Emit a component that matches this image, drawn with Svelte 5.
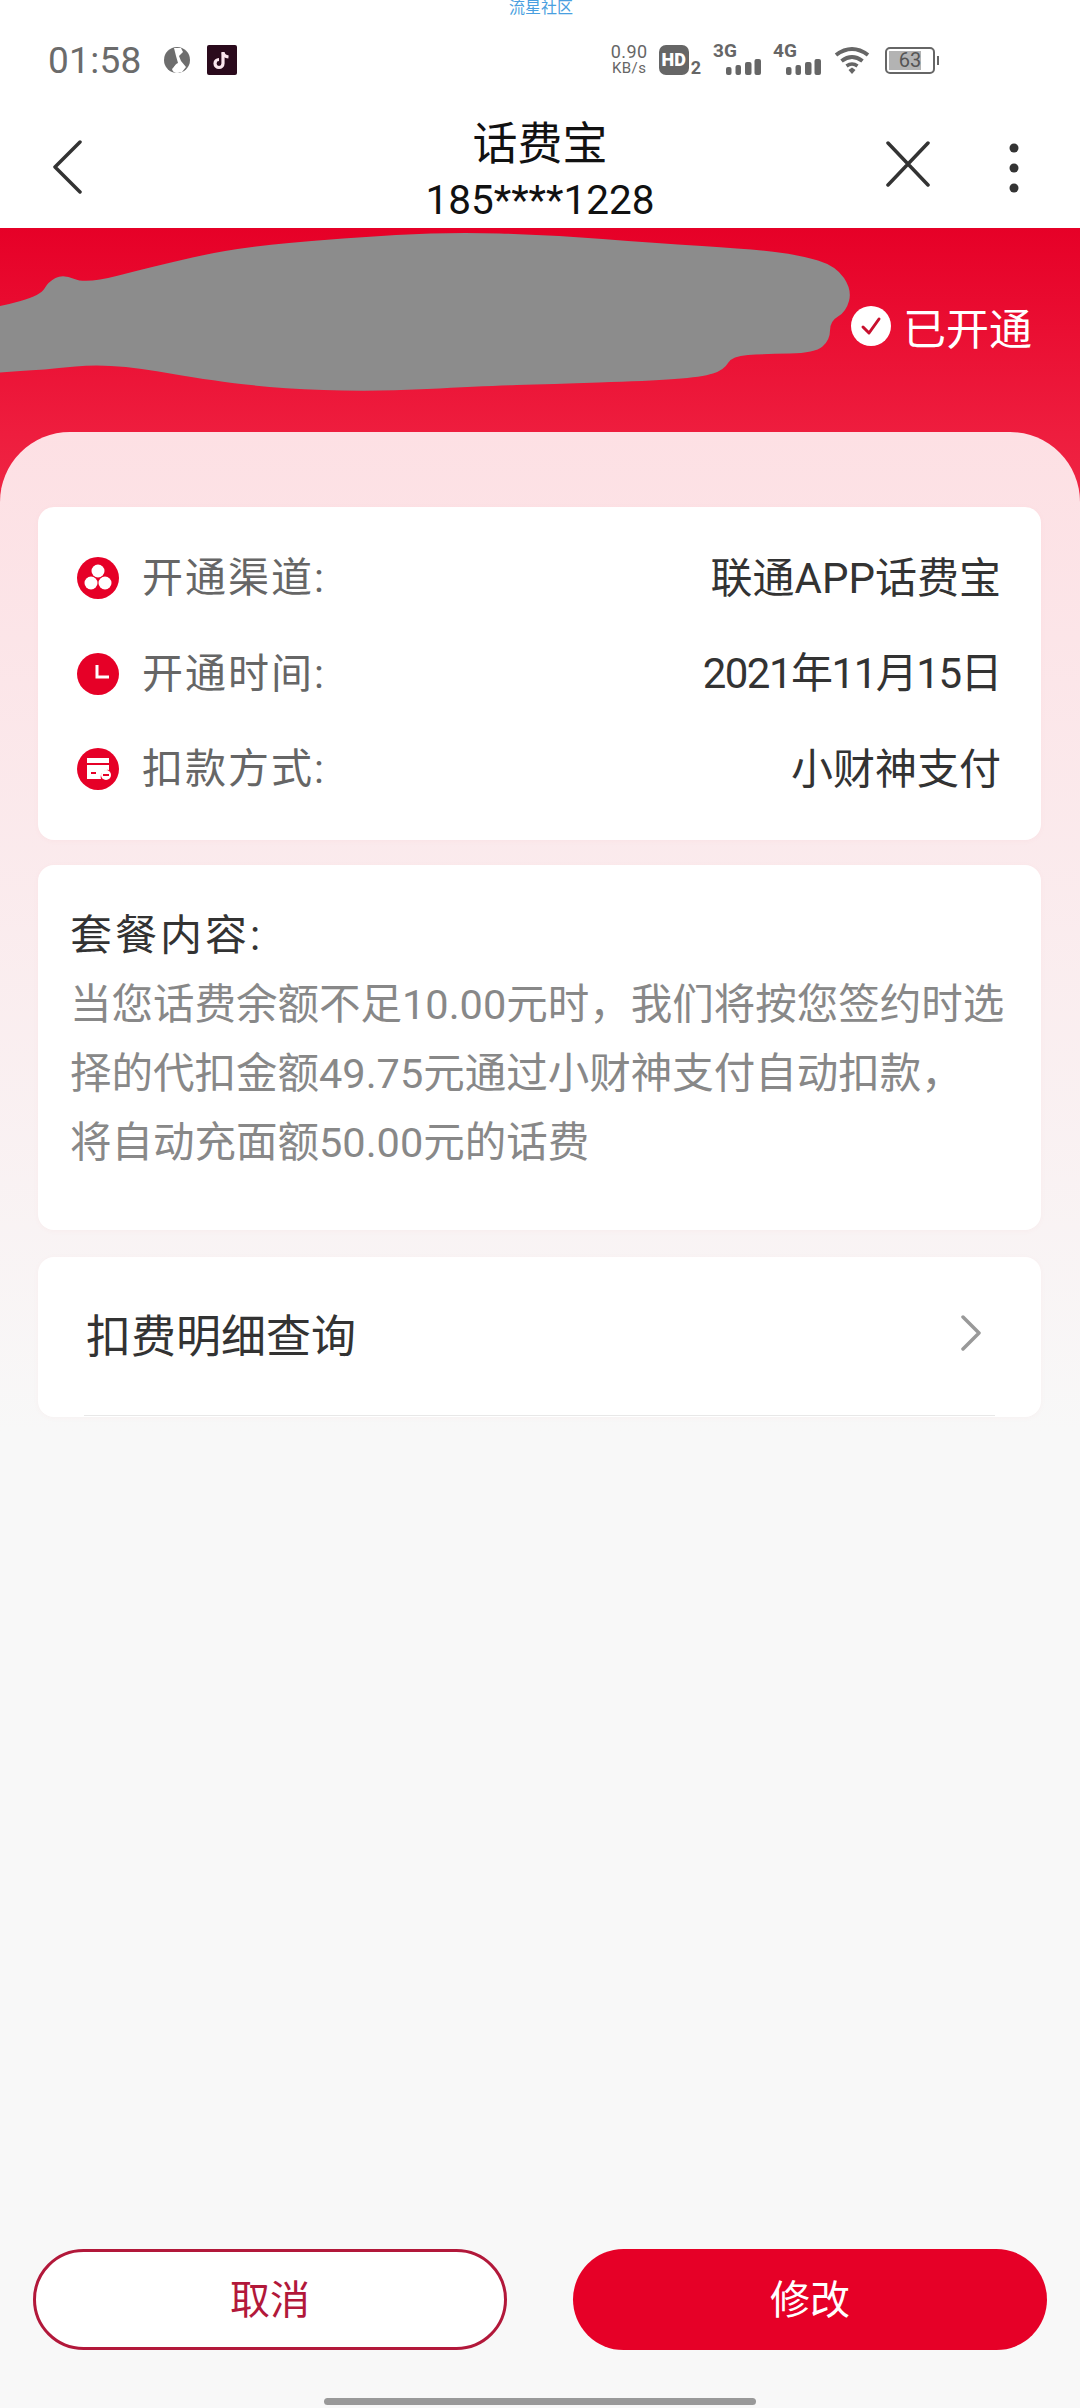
<script>
	const rows = [
		{ label: '开通渠道:', value: '联通APP话费宝', icon: 'channel' },
		{ label: '开通时间:', value: '2021年11月15日', icon: 'clock', tight: true },
		{ label: '扣款方式:', value: '小财神支付', icon: 'card' }
	];
	const bars = [8, 10, 13, 16];

	// outline of the grey smear over the account name
	const outline = [
		[-40, 85], [0, 79], [41, 67], [48, 54], [63, 46], [86, 56], [151, 39], [234, 20], [344, 10],
		[448, 4], [551, 7], [654, 15], [750, 21], [800, 27], [836, 38], [852, 62], [846, 84],
		[830, 93], [830, 112], [815, 125], [764, 126], [732, 128], [724, 142], [702, 149],
		[647, 153], [551, 156], [482, 158], [372, 164], [275, 160], [207, 152], [110, 135],
		[41, 142], [0, 144], [-40, 150], [-40, 100]
	];

	function smooth(pts) {
		let d = `M${pts[0][0]} ${pts[0][1]}`;
		for (let i = 1; i < pts.length - 1; i++) {
			const mx = (pts[i][0] + pts[i + 1][0]) / 2;
			const my = (pts[i][1] + pts[i + 1][1]) / 2;
			d += ` Q${pts[i][0]} ${pts[i][1]} ${mx} ${my}`;
		}
		return d + ' Z';
	}
	const blot = smooth(outline);
</script>

<div class="page">
	<span class="mark">流星社区</span>

	<div class="status">
		<div class="status-left">
			<span class="time">01:58</span>
			<svg class="globe" viewBox="0 0 26 26" width="26" height="26">
				<circle cx="13" cy="13" r="13" fill="#6d6d6d" />
				<path d="M10 1 L17 1 L19 5 L15 9 L17 14 L22 20 L18 25 Q13 26 9 22 Q11 17 14 16 L12 9 Z" fill="#fff" />
				<path d="M8 22 Q13 15 18 22 Q17 26 13 26 Q9 26 8 22 Z" fill="#fff" />
			</svg>
			<svg class="tiktok" viewBox="0 0 30 30" width="30" height="30">
				<rect width="30" height="30" rx="2" fill="#2a0a1c" />
				<path d="M16 7 V18.5 A4 4 0 1 1 12 14.5" fill="none" stroke="#fbe6ee" stroke-width="3.2" />
				<path d="M16 8 Q17 11.5 21.5 12" fill="none" stroke="#fbe6ee" stroke-width="3.2" />
			</svg>
		</div>
		<div class="status-right">
			<div class="speed"><span>0.90</span><span class="unit">KB/s</span></div>
			<div class="hd">
				<span class="hd-box">HD</span>
				<span class="hd-sub">2</span>
			</div>
			<div class="signal">
				<span class="net">3G</span>
				<svg viewBox="0 0 35 16" width="35" height="16">
					{#each bars as h, i}
						<rect x={i * 9.5} y={16 - h} width={i < 2 ? 5.5 : 6.5} height={h} rx="2" fill="#666" />
					{/each}
				</svg>
			</div>
			<div class="signal">
				<span class="net">4G</span>
				<svg viewBox="0 0 35 16" width="35" height="16">
					{#each bars as h, i}
						<rect x={i * 9.5} y={16 - h} width={i < 2 ? 5.5 : 6.5} height={h} rx="2" fill="#666" />
					{/each}
				</svg>
			</div>
			<svg class="wifi" viewBox="0 0 36 28" width="36" height="28">
				<path d="M2 9 Q18 -3 34 9" fill="none" stroke="#666" stroke-width="4" />
				<path d="M7.5 15 Q18 7 28.5 15" fill="none" stroke="#666" stroke-width="4" />
				<path d="M12.5 20 Q18 16 23.5 20" fill="none" stroke="#666" stroke-width="3.5" />
				<path d="M14.5 24 L18 21.5 L21.5 24 L18 28 Z" fill="#666" />
			</svg>
			<div class="battery">
				<span class="battery-fill"></span>
				<span class="battery-num">63</span>
				<span class="battery-cap"></span>
			</div>
		</div>
	</div>

	<div class="nav">
		<div class="nav-side">
			<svg viewBox="0 0 30 54" width="30" height="54">
				<path d="M28 2 L3 27 L28 52" fill="none" stroke="#333" stroke-width="3.5" stroke-linecap="round" stroke-linejoin="round" />
			</svg>
		</div>
		<div class="nav-title">
			<div class="title">话费宝</div>
			<div class="phone">185****1228</div>
		</div>
		<div class="nav-side nav-actions">
			<svg class="close" viewBox="0 0 44 46" width="44" height="46">
				<path d="M2 2 L42 44 M42 2 L2 44" fill="none" stroke="#333" stroke-width="3.5" stroke-linecap="round" />
			</svg>
			<svg viewBox="0 0 10 50" width="10" height="50">
				<circle cx="5" cy="5" r="4.5" fill="#333" />
				<circle cx="5" cy="25" r="4.5" fill="#333" />
				<circle cx="5" cy="45" r="4.5" fill="#333" />
			</svg>
		</div>
	</div>

	<div class="hero">
		<svg class="blot" viewBox="0 0 860 170" width="860" height="170">
			<path d={blot} fill="#8c8c8c" />
		</svg>
		<div class="opened">
			<svg viewBox="0 0 40 40" width="40" height="40">
				<circle cx="20" cy="20" r="20" fill="#fff" />
				<path d="M12 21 L18 27 L28 13" fill="none" stroke="#c8102e" stroke-width="3" stroke-linecap="round" stroke-linejoin="round" />
			</svg>
			<span>已开通</span>
		</div>
	</div>

	<div class="sheet">
		<div class="card info">
			{#each rows as row}
				<div class="row">
					<svg class="row-icon" viewBox="0 0 42 42" width="42" height="42">
						<circle cx="21" cy="21" r="21" fill="#e60027" />
						{#if row.icon === 'channel'}
							<circle cx="21" cy="14" r="6.5" fill="#fff" />
							<circle cx="14" cy="26" r="6.5" fill="#fff" />
							<circle cx="28" cy="26" r="6.5" fill="#fff" />
						{:else if row.icon === 'clock'}
							<path d="M20 12 V24 H32" fill="none" stroke="#fff" stroke-width="3" />
						{:else}
							<rect x="10" y="10" width="22" height="5" fill="#fff" />
							<path d="M10 17 H32 V22 A7 7 0 0 0 24 31 H10 Z" fill="#fff" />
							<path d="M14 25 H19" stroke="#e60027" stroke-width="2" />
							<circle cx="29" cy="27" r="5" fill="#fff" />
							<path d="M26 27 H32" stroke="#e60027" stroke-width="2" />
						{/if}
					</svg>
					<span class="label">{row.label}</span>
					<span class="value" class:tight={row.tight}>{row.value}</span>
				</div>
			{/each}
		</div>

		<div class="card plan">
			<div class="plan-title">套餐内容:</div>
			<div class="plan-text">当您话费余额不足10.00元时，我们将按您签约时选<br />择的代扣金额49.75元通过小财神支付自动扣款，<br />将自动充面额50.00元的话费</div>
		</div>

		<div class="card query">
			<span>扣费明细查询</span>
			<svg viewBox="0 0 20 36" width="20" height="36">
				<path d="M2 2 L18 18 L2 34" fill="none" stroke="#999" stroke-width="3.5" stroke-linecap="round" stroke-linejoin="round" />
			</svg>
			<span class="query-line"></span>
		</div>

		<div class="footer">
			<button class="btn btn-cancel">取消</button>
			<button class="btn btn-change">修改</button>
		</div>
		<div class="handle"></div>
	</div>
</div>

<style>
	:global(body) {
		margin: 0;
		background: #fff;
	}

	.page {
		position: relative;
		width: 1080px;
		height: 2408px;
		overflow: hidden;
		display: flex;
		flex-direction: column;
		font-family: Roboto, "Noto Sans CJK SC", sans-serif;
		color: #333;
	}

	.mark {
		position: absolute;
		top: 0;
		left: 509px;
		font-size: 16px;
		line-height: 16px;
		color: #4a9fe0;
	}

	/* status bar */
	.status {
		height: 120px;
		flex: none;
		display: flex;
		align-items: center;
		justify-content: space-between;
		padding: 0 145px 0 48px;
		box-sizing: border-box;
		color: #666;
	}

	.status-left,
	.status-right {
		display: flex;
		align-items: center;
	}

	.time {
		font-size: 37px;
		width: 116px;
		color: #6b6b6b;
		letter-spacing: 0.3px;
	}

	.globe {
		margin: 0 17px 0 0;
	}

	.speed {
		width: 37px;
		display: flex;
		flex-direction: column;
		align-items: center;
		font-size: 18px;
		line-height: 16px;
		letter-spacing: 0.4px;
		margin-right: 11px;
	}

	.speed .unit {
		font-size: 15px;
	}

	.hd {
		display: flex;
		align-items: flex-end;
		margin-right: 12px;
	}

	.hd-box {
		width: 30px;
		height: 30px;
		border-radius: 7px;
		background: #666;
		color: #fff;
		font-size: 18px;
		font-weight: 900;
		line-height: 30px;
		text-align: center;
	}

	.hd-sub {
		margin-left: 2px;
		font-size: 18px;
		font-weight: 700;
		line-height: 14px;
	}

	.signal {
		position: relative;
		width: 48px;
		height: 30px;
		margin-right: 12px;
		display: flex;
		align-items: flex-end;
		justify-content: flex-end;
	}

	.net {
		position: absolute;
		left: 0;
		top: -3px;
		font-size: 19px;
		font-weight: 700;
		line-height: 18px;
	}

	.wifi {
		margin: 0 15px 0 1px;
	}

	.battery {
		position: relative;
		width: 50px;
		height: 27px;
		border: 2px solid #666;
		border-radius: 5px;
		box-sizing: border-box;
		display: flex;
		align-items: center;
		justify-content: center;
	}

	.battery-fill {
		position: absolute;
		left: 2px;
		top: 2px;
		bottom: 2px;
		width: 32px;
		background: #b3b3b3;
	}

	.battery-num {
		position: relative;
		font-size: 20px;
		color: #555;
	}

	.battery-cap {
		position: absolute;
		right: -6px;
		top: 7px;
		width: 2px;
		height: 9px;
		background: #666;
	}

	/* nav */
	.nav {
		height: 108px;
		flex: none;
		display: flex;
		align-items: flex-start;
		box-sizing: border-box;
	}

	.nav-side {
		width: 240px;
		flex: none;
		box-sizing: border-box;
		padding: 20px 0 0 52px;
		display: flex;
		align-items: flex-start;
	}

	.nav-actions {
		padding: 23px 61px 0 0;
		justify-content: flex-end;
		gap: 79px;
	}

	.close {
		margin-top: -2px;
	}

	.nav-title {
		flex: 1;
		text-align: center;
		color: #111;
	}

	.title {
		font-size: 45px;
		line-height: 50px;
	}

	.phone {
		font-size: 40.5px;
		line-height: 44px;
		margin-top: 8px;
	}

	/* red band */
	.hero {
		position: relative;
		height: 274px;
		flex: none;
		background: linear-gradient(#e60027, #ee1d3e 75%, #ef2644);
		display: flex;
		justify-content: flex-end;
		padding: 78px 48px 0 0;
		box-sizing: border-box;
	}

	.blot {
		position: absolute;
		left: 0;
		top: 0;
	}

	.opened {
		display: flex;
		align-items: center;
		gap: 12px;
		height: 40px;
		color: #fff;
		font-size: 43px;
	}

	/* content */
	.sheet {
		position: relative;
		flex: 1;
		margin-top: -70px;
		border-radius: 70px 70px 0 0;
		background: linear-gradient(#fde0e4, #f8f8f8 1000px);
		padding: 75px 39px 0 38px;
		box-sizing: border-box;
		display: flex;
		flex-direction: column;
	}

	.card {
		background: #fff;
		border-radius: 16px;
		box-shadow: 0 1px 6px rgba(230, 0, 39, 0.03);
	}

	.info {
		height: 333px;
		padding: 47px 40px 0 39px;
		box-sizing: border-box;
		display: flex;
		flex-direction: column;
		gap: 47.5px;
	}

	.row {
		height: 48px;
		display: flex;
		align-items: center;
		font-size: 42px;
	}

	.row-icon {
		margin-right: 23px;
	}

	.label,
	.value {
		padding-bottom: 8px;
	}

	.label {
		color: #666;
		font-size: 41px;
		letter-spacing: 2px;
	}

	.value {
		margin-left: auto;
		color: #333;
	}

	.value.tight {
		letter-spacing: -1.5px;
	}

	.plan {
		height: 365px;
		margin-top: 25px;
		padding: 36px 0 0 32px;
		box-sizing: border-box;
	}

	.plan-title {
		font-size: 42px;
		line-height: 69px;
		color: #333;
		letter-spacing: 3px;
	}

	.plan-text {
		font-size: 41.5px;
		line-height: 69px;
		color: #888;
		white-space: nowrap;
	}

	.query {
		position: relative;
		height: 160px;
		margin-top: 27px;
		padding: 0 60px 8px 48px;
		box-sizing: border-box;
		display: flex;
		align-items: center;
		justify-content: space-between;
		font-size: 45px;
		color: #333;
	}

	.query-line {
		position: absolute;
		left: 46px;
		right: 46px;
		bottom: 1px;
		height: 1px;
		background: #e8e8e8;
	}

	.footer {
		margin-top: auto;
		display: flex;
		justify-content: space-between;
		margin-left: -5px;
		margin-right: -6px;
	}

	.btn {
		width: 474px;
		height: 101px;
		border-radius: 51px;
		font-family: inherit;
		font-size: 40px;
		padding: 0 0 6px;
		box-sizing: border-box;
	}

	.btn-cancel {
		background: #fff;
		border: 3px solid #b2183a;
		color: #b2183a;
	}

	.btn-change {
		background: #e60027;
		border: 0;
		color: #fff;
	}

	.handle {
		align-self: center;
		width: 432px;
		height: 7px;
		border-radius: 4px;
		background: #999;
		margin: 48px 0 3px;
	}
</style>
